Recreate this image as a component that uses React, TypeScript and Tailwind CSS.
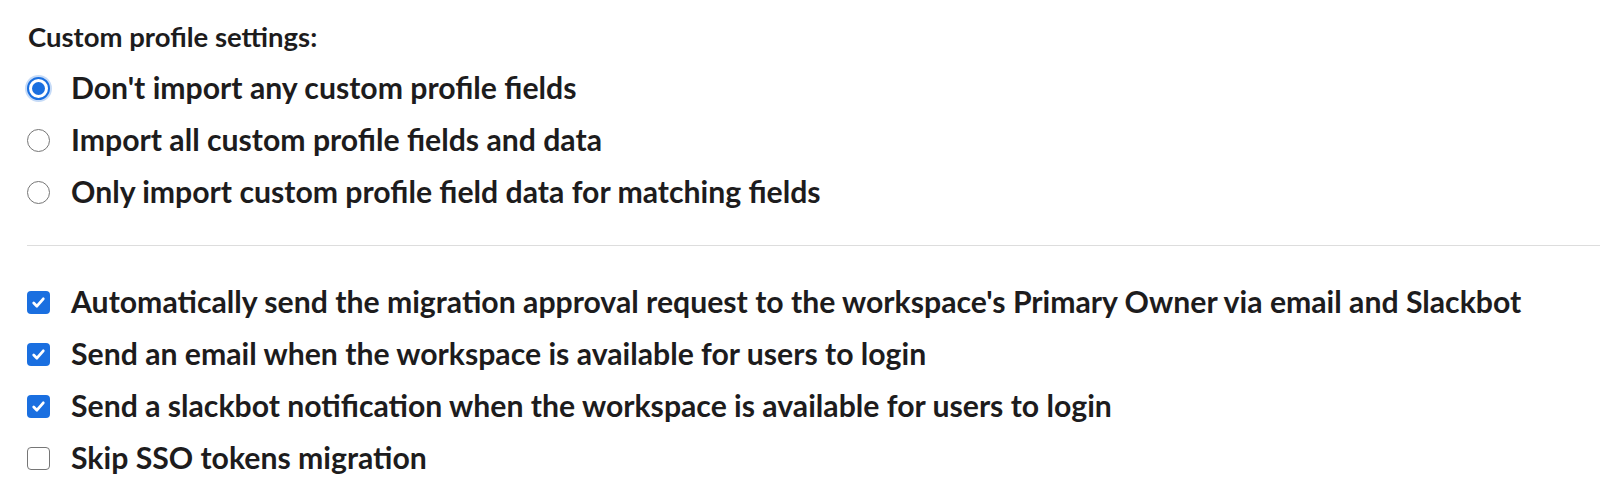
import React from 'react'

const radios = [
  { label: "Don't import any custom profile fields", checked: true },
  { label: 'Import all custom profile fields and data', checked: false },
  { label: 'Only import custom profile field data for matching fields', checked: false },
]

const checks = [
  { label: "Automatically send the migration approval request to the workspace's Primary Owner via email and Slackbot", checked: true },
  { label: 'Send an email when the workspace is available for users to login', checked: true },
  { label: 'Send a slackbot notification when the workspace is available for users to login', checked: true },
  { label: 'Skip SSO tokens migration', checked: false },
]

function Radio({ checked }: { checked: boolean }) {
  return checked ? (
    <span className="w-[23px] h-[23px] rounded-full border-[2px] border-[#1a6fe0] bg-white flex items-center justify-center shrink-0 shadow-[0_0_0_2px_rgba(26,111,224,0.25)]">
      <span className="w-[13px] h-[13px] rounded-full bg-[#1a6fe0]" />
    </span>
  ) : (
    <span className="w-[23px] h-[23px] rounded-full border-[1.5px] border-[#767676] bg-white shrink-0" />
  )
}

function Check({ checked }: { checked: boolean }) {
  return checked ? (
    <span className="w-[23px] h-[23px] rounded-[4px] bg-[#1a6fe0] flex items-center justify-center shrink-0">
      <svg viewBox="0 0 16 16" className="w-[17px] h-[17px]" fill="none" stroke="white" strokeWidth="2.6" strokeLinecap="round" strokeLinejoin="round">
        <path d="M3.5 8.5 L6.5 11.5 L12.5 4.5" />
      </svg>
    </span>
  ) : (
    <span className="w-[23px] h-[23px] rounded-[4px] border-[1.5px] border-[#767676] bg-white shrink-0" />
  )
}

export default function App() {
  return (
    <div className="w-[1600px] h-[501px] bg-white text-[#1d1c1d] pl-[27px] pt-[17px]" style={{ fontFamily: 'Lato, "Noto Sans", sans-serif' }}>
      <div className="pl-[1px] text-[27.5px] font-bold leading-[40px]">Custom profile settings:</div>
      <div className="flex flex-col mt-[5px]">
        {radios.map((r) => (
          <label key={r.label} className="flex items-center gap-[21px] h-[52px] text-[30.2px] font-bold">
            <Radio checked={r.checked} />
            <span>{r.label}</span>
          </label>
        ))}
      </div>
      <div className="h-[1px] bg-[#dddddd] mt-[27px] mb-[30px]" />
      <div className="flex flex-col">
        {checks.map((c) => (
          <label key={c.label} className="flex items-center gap-[21px] h-[52px] text-[30.2px] font-bold">
            <Check checked={c.checked} />
            <span>{c.label}</span>
          </label>
        ))}
      </div>
    </div>
  )
}
